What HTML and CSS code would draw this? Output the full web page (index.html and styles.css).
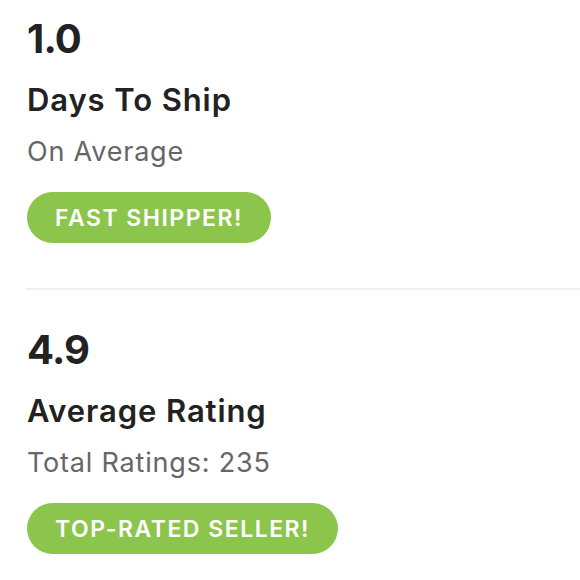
FILE: index.html
```html
<!DOCTYPE html>
<html>
<head>
<meta charset="utf-8">
<link rel="stylesheet" href="styles.css">
</head>
<body>
<div class="stats">
  <section class="stat first">
    <div class="value">1.0</div>
    <div class="title">Days To Ship</div>
    <div class="sub">On Average</div>
    <div class="badge">FAST SHIPPER!</div>
  </section>
  <section class="stat">
    <div class="value">4.9</div>
    <div class="title">Average Rating</div>
    <div class="sub">Total Ratings: 235</div>
    <div class="badge">TOP-RATED SELLER!</div>
  </section>
</div>
</body>
</html>
```
FILE: styles.css
```css
html, body {
  margin: 0;
  padding: 0;
  background: #ffffff;
}
body {
  font-family: Inter, "Liberation Sans", sans-serif;
  width: 580px;
  height: 580px;
  overflow: hidden;
}
.stats {
  margin-left: 26px;
  display: flex;
  flex-direction: column;
}
.stat {
  display: flex;
  flex-direction: column;
  align-items: flex-start;
  padding: 36px 0 45px 1px;
  border-top: 2px solid #efefef;
}
.stat.first {
  padding-top: 15px;
  border-top: none;
}
.value {
  font-size: 40px;
  line-height: 48px;
  font-weight: 700;
  color: #222222;
  letter-spacing: -0.8px;
}
.title {
  margin-top: 17px;
  font-size: 31px;
  line-height: 40px;
  font-weight: 600;
  color: #222222;
  letter-spacing: 0.9px;
}
.sub {
  margin-top: 14px;
  font-size: 27px;
  line-height: 36px;
  font-weight: 400;
  color: #666666;
  letter-spacing: 0.8px;
}
.badge {
  margin-top: 22px;
  height: 51px;
  box-sizing: border-box;
  padding: 0 28px 0 28px;
  border-radius: 26px;
  background: #8cc54c;
  color: #ffffff;
  font-size: 23px;
  font-weight: 600;
  letter-spacing: 1.5px;
  display: flex;
  align-items: center;
}
```
